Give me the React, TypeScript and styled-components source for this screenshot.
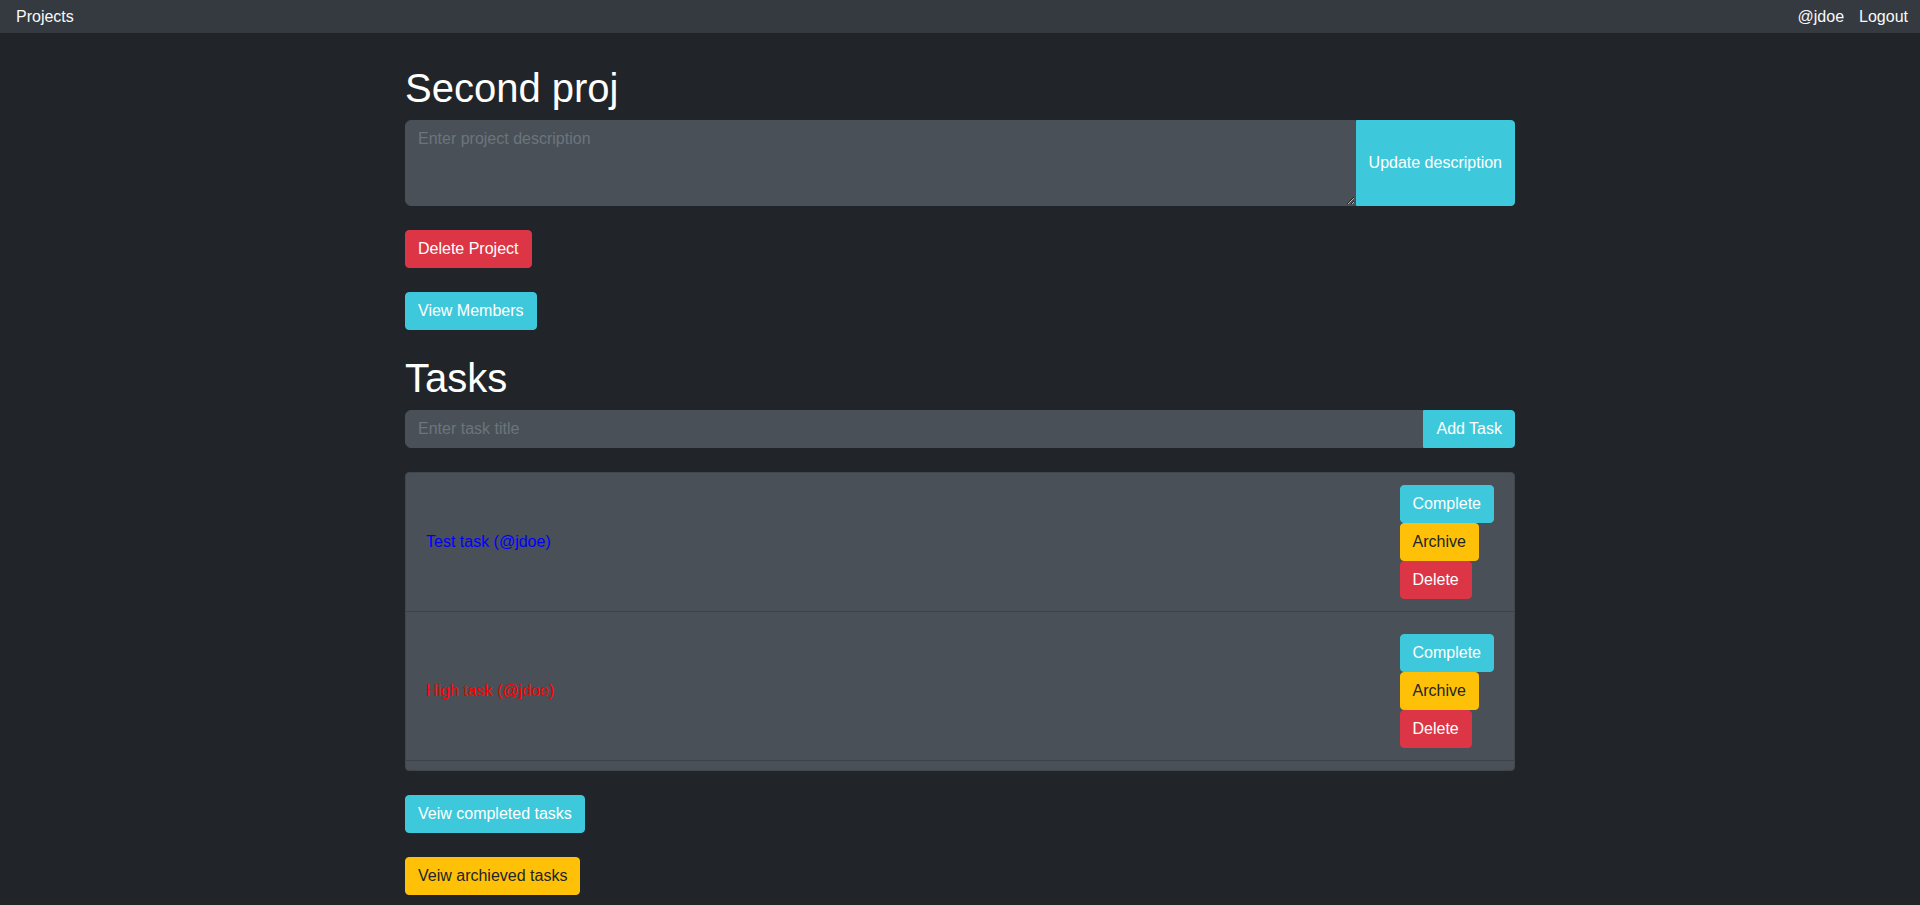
import React from "react";
import styled, { createGlobalStyle, css } from "styled-components";

const GlobalStyle = createGlobalStyle`
  html { overflow-y: scroll; }
  html, body { margin: 0; padding: 0; }
  body {
    background: #212529;
    color: #fff;
    font-family: "Liberation Sans", Arial, sans-serif;
    font-size: 16px;
    line-height: 1.5;
  }
  * { box-sizing: border-box; }
  ::-webkit-scrollbar { width: 4px; }
  ::-webkit-scrollbar-track { background: #1b1e22; }
  ::-webkit-scrollbar-thumb { background: #8c8c8c; }
`;

const NavBar = styled.nav`
  height: 33px;
  background: #343a40;
  display: flex;
  align-items: center;
  justify-content: space-between;
  padding: 0 12px 0 16px;
`;

const NavLink = styled.a`
  color: #f8f9fa;
  text-decoration: none;
  font-size: 16px;
  line-height: 24px;
`;

const NavRight = styled.div`
  display: flex;
  gap: 15px;
`;

const Container = styled.main`
  max-width: 1140px;
  margin: 0 auto;
  padding: 31px 15px 24px;
`;

const Heading = styled.h1`
  font-size: 40px;
  font-weight: 400;
  line-height: 48px;
  margin: 0 0 8px;
  color: #fff;
`;

const InputGroup = styled.div`
  display: flex;
  align-items: stretch;
  margin-bottom: 24px;
`;

const fieldStyles = css`
  flex: 1;
  background: #495057;
  border: 1px solid #495057;
  color: #fff;
  font-family: inherit;
  font-size: 16px;
  line-height: 24px;
  padding: 6px 12px;
  border-radius: 6px 0 0 6px;
  outline: none;
  &::placeholder { color: #6c757d; }
`;

const TextArea = styled.textarea`
  ${fieldStyles}
  height: 86px;
  resize: vertical;
`;

const TextInput = styled.input`
  ${fieldStyles}
  height: 38px;
`;

type Variant = "info" | "warning" | "danger";

const palette: Record<Variant, { bg: string; fg: string }> = {
  info: { bg: "#3dc9db", fg: "#fff" },
  warning: { bg: "#ffc107", fg: "#212529" },
  danger: { bg: "#dc3545", fg: "#fff" },
};

const Button = styled.button<{ $variant: Variant; $attached?: boolean }>`
  display: inline-flex;
  align-items: center;
  justify-content: center;
  height: 38px;
  padding: 6px 12px;
  border: 1px solid ${(p) => palette[p.$variant].bg};
  background: ${(p) => palette[p.$variant].bg};
  color: ${(p) => palette[p.$variant].fg};
  font-family: inherit;
  font-size: 16px;
  line-height: 24px;
  border-radius: ${(p) => (p.$attached ? "0 4px 4px 0" : "4px")};
  cursor: pointer;
  white-space: nowrap;
`;

const TallButton = styled(Button)`
  height: auto;
`;

const Block = styled.div`
  margin-bottom: 24px;
`;

const TaskList = styled.div`
  background: #495057;
  border: 1px solid #41464c;
  border-radius: 4px;
  padding-bottom: 9px;
  margin-bottom: 24px;
`;

const TaskItem = styled.div<{ $first?: boolean }>`
  display: flex;
  align-items: center;
  justify-content: space-between;
  padding: ${(p) => (p.$first ? "12px" : "22px")} 20px 12px 20px;
  border-bottom: 1px solid #3d4248;
`;

const TaskTitle = styled.span<{ $color: string }>`
  color: ${(p) => p.$color};
  font-size: 16px;
`;

const Actions = styled.div`
  display: flex;
  flex-direction: column;
  align-items: flex-start;
`;

const tasks = [
  { title: "Test task (@jdoe)", color: "#0000ff" },
  { title: "High task (@jdoe)", color: "#ff0000" },
];

export default function App() {
  return (
    <>
      <GlobalStyle />
      <NavBar>
        <NavLink href="#">Projects</NavLink>
        <NavRight>
          <NavLink href="#">@jdoe</NavLink>
          <NavLink href="#">Logout</NavLink>
        </NavRight>
      </NavBar>
      <Container>
        <Heading>Second proj</Heading>
        <InputGroup>
          <TextArea placeholder="Enter project description" rows={3} />
          <TallButton $variant="info" $attached>
            Update description
          </TallButton>
        </InputGroup>
        <Block>
          <Button $variant="danger">Delete Project</Button>
        </Block>
        <Block>
          <Button $variant="info">View Members</Button>
        </Block>
        <Heading>Tasks</Heading>
        <InputGroup>
          <TextInput placeholder="Enter task title" />
          <Button $variant="info" $attached>
            Add Task
          </Button>
        </InputGroup>
        <TaskList>
          {tasks.map((t, i) => (
            <TaskItem key={t.title} $first={i === 0}>
              <TaskTitle $color={t.color}>{t.title}</TaskTitle>
              <Actions>
                <Button $variant="info">Complete</Button>
                <Button $variant="warning">Archive</Button>
                <Button $variant="danger">Delete</Button>
              </Actions>
            </TaskItem>
          ))}
        </TaskList>
        <Block>
          <Button $variant="info">Veiw completed tasks</Button>
        </Block>
        <Block>
          <Button $variant="warning">Veiw archieved tasks</Button>
        </Block>
      </Container>
    </>
  );
}
